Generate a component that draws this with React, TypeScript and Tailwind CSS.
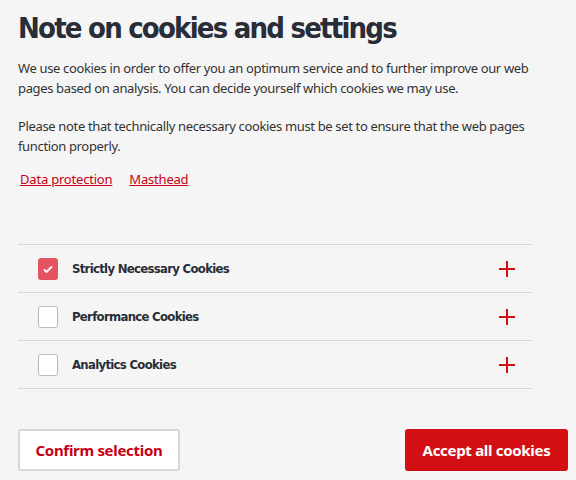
import { useState } from 'react'

const ROWS = [
  { label: 'Strictly Necessary Cookies', locked: true },
  { label: 'Performance Cookies', locked: false },
  { label: 'Analytics Cookies', locked: false },
]

function Plus() {
  return (
    <svg width="18" height="18" viewBox="0 0 18 18" className="text-[#d40f14]">
      <path d="M9 1v16M1 9h16" stroke="currentColor" strokeWidth="2" fill="none" />
    </svg>
  )
}

export default function App() {
  const [checked, setChecked] = useState<boolean[]>([true, false, false])

  return (
    <div
      className="min-h-[480px] w-[576px] bg-[#f5f5f5] pl-[18px] pr-2 text-[#333]"
      style={{ fontFamily: '"Noto Sans", "Open Sans", sans-serif' }}
    >
      <h1
        className="pt-[8px] text-[29px] font-bold leading-[40px] tracking-[-1.8px] text-[#282d37]"
        style={{ fontFamily: '"DejaVu Sans Condensed", "DejaVu Sans", sans-serif' }}
      >
        Note on cookies and settings
      </h1>

      <p className="mt-[10px] w-[524px] text-[13px] leading-[20px] tracking-[-0.35px]">
        We use cookies in order to offer you an optimum service and to further improve our web pages based on
        analysis. You can decide yourself which cookies we may use.
      </p>
      <p className="mt-[18px] w-[524px] text-[13px] leading-[20px] tracking-[-0.35px]">
        Please note that technically necessary cookies must be set to ensure that the web pages function properly.
      </p>

      <div className="mt-[13px] flex gap-[17px] pl-[2px] text-[13px] leading-[20px] tracking-[-0.2px] text-[#c50014]">
        <a href="#" className="underline">Data protection</a>
        <a href="#" className="underline">Masthead</a>
      </div>

      <ul
        className="mt-[55px] w-[514px] border-t border-[#d7d7d7]"
        style={{ fontFamily: '"DejaVu Sans Condensed", "DejaVu Sans", sans-serif' }}
      >
        {ROWS.map((row, i) => (
          <li key={row.label} className="flex h-[48px] items-center border-b border-[#d7d7d7] pl-5 pr-4">
            <button
              onClick={() => !row.locked && setChecked(c => c.map((v, j) => (j === i ? !v : v)))}
              className={
                checked[i]
                  ? 'flex h-[22px] w-[20px] items-center justify-center rounded-[3px] bg-[#e35460]'
                  : 'h-[22px] w-[20px] rounded-[3px] border border-[#bbb] bg-white'
              }
            >
              {checked[i] && (
                <svg width="12" height="12" viewBox="0 0 12 12">
                  <path d="M2 6.5l2.5 2.5L10 3.5" stroke="white" strokeWidth="1.8" fill="none" />
                </svg>
              )}
            </button>
            <span className="ml-[14px] flex-1 text-[13px] font-bold tracking-[-0.7px] text-[#282d37]">{row.label}</span>
            <Plus />
          </li>
        ))}
      </ul>

      <div className="mt-[40px] flex justify-between">
        <button className="h-[42px] w-[162px] rounded-[3px] border-2 border-[#d7d7d7] bg-white text-[15px] font-bold tracking-[-0.3px] text-[#c50014]">
          Confirm selection
        </button>
        <button className="h-[42px] w-[163px] rounded-[3px] bg-[#d40f14] text-[15px] font-bold tracking-[-0.3px] text-white">
          Accept all cookies
        </button>
      </div>
    </div>
  )
}
